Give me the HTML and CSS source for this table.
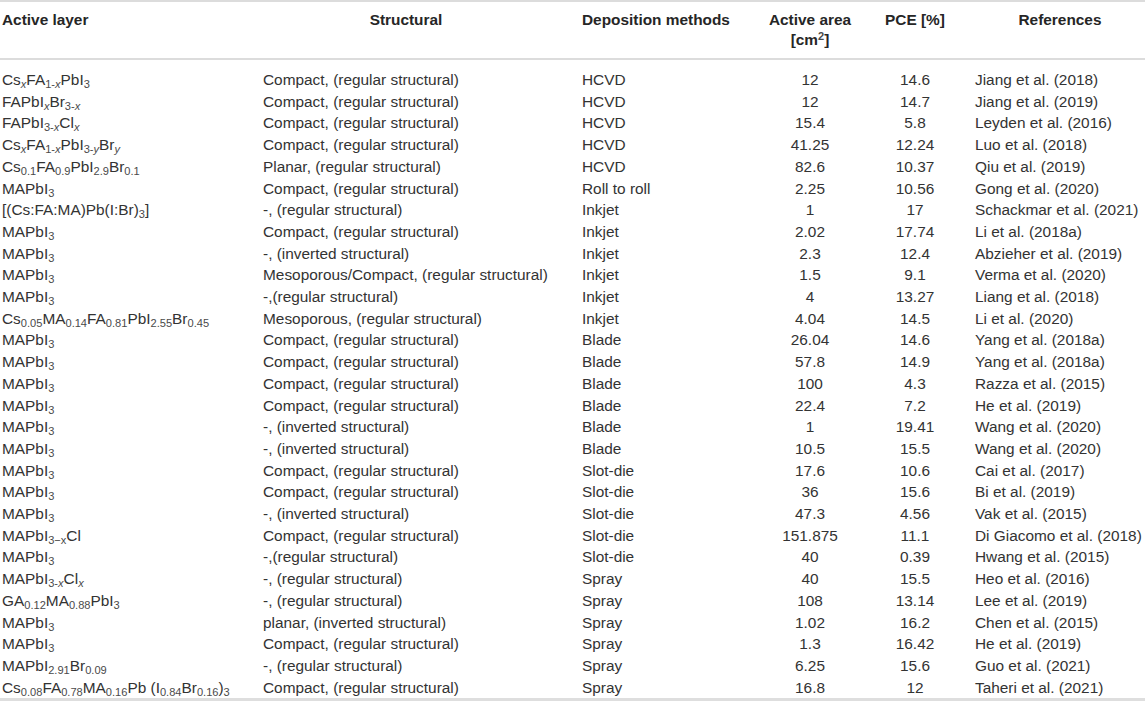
FILE: index.html
```html
<!DOCTYPE html>
<html>
<head>
<meta charset="utf-8">
<link rel="stylesheet" href="styles.css">
</head>
<body>
<table class="data">
<colgroup>
<col class="c1"><col class="c2"><col class="c3"><col class="c4"><col class="c5"><col class="c6">
</colgroup>
<thead>
<tr>
<th class="left first-col">Active layer</th>
<th class="center struct">Structural</th>
<th class="left">Deposition methods</th>
<th class="center">Active area<br>[cm<sup>2</sup>]</th>
<th class="center">PCE [%]</th>
<th class="center refs">References</th>
</tr>
</thead>
<tbody>
<tr class="first"><td>Cs<sub><i>x</i></sub>FA<sub>1-<i>x</i></sub>PbI<sub>3</sub></td><td>Compact, (regular structural)</td><td>HCVD</td><td class="num">12</td><td class="num">14.6</td><td>Jiang et al. (2018)</td></tr>
<tr><td>FAPbI<sub><i>x</i></sub>Br<sub>3-<i>x</i></sub></td><td>Compact, (regular structural)</td><td>HCVD</td><td class="num">12</td><td class="num">14.7</td><td>Jiang et al. (2019)</td></tr>
<tr><td>FAPbI<sub>3-<i>x</i></sub>Cl<sub><i>x</i></sub></td><td>Compact, (regular structural)</td><td>HCVD</td><td class="num">15.4</td><td class="num">5.8</td><td>Leyden et al. (2016)</td></tr>
<tr><td>Cs<sub><i>x</i></sub>FA<sub>1-<i>x</i></sub>PbI<sub>3-<i>y</i></sub>Br<sub><i>y</i></sub></td><td>Compact, (regular structural)</td><td>HCVD</td><td class="num">41.25</td><td class="num">12.24</td><td>Luo et al. (2018)</td></tr>
<tr><td>Cs<sub>0.1</sub>FA<sub>0.9</sub>PbI<sub>2.9</sub>Br<sub>0.1</sub></td><td>Planar, (regular structural)</td><td>HCVD</td><td class="num">82.6</td><td class="num">10.37</td><td>Qiu et al. (2019)</td></tr>
<tr><td>MAPbI<sub>3</sub></td><td>Compact, (regular structural)</td><td>Roll to roll</td><td class="num">2.25</td><td class="num">10.56</td><td>Gong et al. (2020)</td></tr>
<tr><td>[(Cs:FA:MA)Pb(I:Br)<sub>3</sub>]</td><td>-, (regular structural)</td><td>Inkjet</td><td class="num">1</td><td class="num">17</td><td>Schackmar et al. (2021)</td></tr>
<tr><td>MAPbI<sub>3</sub></td><td>Compact, (regular structural)</td><td>Inkjet</td><td class="num">2.02</td><td class="num">17.74</td><td>Li et al. (2018a)</td></tr>
<tr><td>MAPbI<sub>3</sub></td><td>-, (inverted structural)</td><td>Inkjet</td><td class="num">2.3</td><td class="num">12.4</td><td>Abzieher et al. (2019)</td></tr>
<tr><td>MAPbI<sub>3</sub></td><td>Mesoporous/Compact, (regular structural)</td><td>Inkjet</td><td class="num">1.5</td><td class="num">9.1</td><td>Verma et al. (2020)</td></tr>
<tr><td>MAPbI<sub>3</sub></td><td>-,(regular structural)</td><td>Inkjet</td><td class="num">4</td><td class="num">13.27</td><td>Liang et al. (2018)</td></tr>
<tr><td>Cs<sub>0.05</sub>MA<sub>0.14</sub>FA<sub>0.81</sub>PbI<sub>2.55</sub>Br<sub>0.45</sub></td><td>Mesoporous, (regular structural)</td><td>Inkjet</td><td class="num">4.04</td><td class="num">14.5</td><td>Li et al. (2020)</td></tr>
<tr><td>MAPbI<sub>3</sub></td><td>Compact, (regular structural)</td><td>Blade</td><td class="num">26.04</td><td class="num">14.6</td><td>Yang et al. (2018a)</td></tr>
<tr><td>MAPbI<sub>3</sub></td><td>Compact, (regular structural)</td><td>Blade</td><td class="num">57.8</td><td class="num">14.9</td><td>Yang et al. (2018a)</td></tr>
<tr><td>MAPbI<sub>3</sub></td><td>Compact, (regular structural)</td><td>Blade</td><td class="num">100</td><td class="num">4.3</td><td>Razza et al. (2015)</td></tr>
<tr><td>MAPbI<sub>3</sub></td><td>Compact, (regular structural)</td><td>Blade</td><td class="num">22.4</td><td class="num">7.2</td><td>He et al. (2019)</td></tr>
<tr><td>MAPbI<sub>3</sub></td><td>-, (inverted structural)</td><td>Blade</td><td class="num">1</td><td class="num">19.41</td><td>Wang et al. (2020)</td></tr>
<tr><td>MAPbI<sub>3</sub></td><td>-, (inverted structural)</td><td>Blade</td><td class="num">10.5</td><td class="num">15.5</td><td>Wang et al. (2020)</td></tr>
<tr><td>MAPbI<sub>3</sub></td><td>Compact, (regular structural)</td><td>Slot-die</td><td class="num">17.6</td><td class="num">10.6</td><td>Cai et al. (2017)</td></tr>
<tr><td>MAPbI<sub>3</sub></td><td>Compact, (regular structural)</td><td>Slot-die</td><td class="num">36</td><td class="num">15.6</td><td>Bi et al. (2019)</td></tr>
<tr><td>MAPbI<sub>3</sub></td><td>-, (inverted structural)</td><td>Slot-die</td><td class="num">47.3</td><td class="num">4.56</td><td>Vak et al. (2015)</td></tr>
<tr><td>MAPbI<sub>3−x</sub>Cl</td><td>Compact, (regular structural)</td><td>Slot-die</td><td class="num">151.875</td><td class="num">11.1</td><td>Di Giacomo et al. (2018)</td></tr>
<tr><td>MAPbI<sub>3</sub></td><td>-,(regular structural)</td><td>Slot-die</td><td class="num">40</td><td class="num">0.39</td><td>Hwang et al. (2015)</td></tr>
<tr><td>MAPbI<sub>3-<i>x</i></sub>Cl<sub><i>x</i></sub></td><td>-, (regular structural)</td><td>Spray</td><td class="num">40</td><td class="num">15.5</td><td>Heo et al. (2016)</td></tr>
<tr><td>GA<sub>0.12</sub>MA<sub>0.88</sub>PbI<sub>3</sub></td><td>-, (regular structural)</td><td>Spray</td><td class="num">108</td><td class="num">13.14</td><td>Lee et al. (2019)</td></tr>
<tr><td>MAPbI<sub>3</sub></td><td>planar, (inverted structural)</td><td>Spray</td><td class="num">1.02</td><td class="num">16.2</td><td>Chen et al. (2015)</td></tr>
<tr><td>MAPbI<sub>3</sub></td><td>Compact, (regular structural)</td><td>Spray</td><td class="num">1.3</td><td class="num">16.42</td><td>He et al. (2019)</td></tr>
<tr><td>MAPbI<sub>2.91</sub>Br<sub>0.09</sub></td><td>-, (regular structural)</td><td>Spray</td><td class="num">6.25</td><td class="num">15.6</td><td>Guo et al. (2021)</td></tr>
<tr class="last"><td>Cs<sub>0.08</sub>FA<sub>0.78</sub>MA<sub>0.16</sub>Pb (I<sub>0.84</sub>Br<sub>0.16</sub>)<sub>3</sub></td><td>Compact, (regular structural)</td><td>Spray</td><td class="num">16.8</td><td class="num">12</td><td>Taheri et al. (2021)</td></tr>
</tbody>
</table>
</body>
</html>
```

FILE: styles.css
```css
html, body {
  margin: 0;
  padding: 0;
  background: #ffffff;
}

.data {
  width: 1145px;
  border-collapse: collapse;
  table-layout: fixed;
  font-family: "Liberation Sans", Arial, sans-serif;
  font-size: 15.4px;
  color: #333333;
}

.c1 { width: 263px; }
.c2 { width: 319px; }
.c3 { width: 178px; }
.c4 { width: 100px; }
.c5 { width: 110px; }
.c6 { width: 175px; }

.data thead th {
  font-weight: bold;
  color: #262626;
  line-height: 20px;
  padding: 8px 0 8px 0;
  border-top: 2px solid #dcdcdc;
  border-bottom: 2px solid #dcdcdc;
  vertical-align: top;
  white-space: nowrap;
}

.data th.left { text-align: left; }
.data th.center { text-align: center; }
.data th.first-col { padding-left: 2px; }
.data th.struct { padding-right: 33px; }
.data th.refs { padding-left: 5px; }

.data td {
  padding: 0;
  line-height: 21.7px;
  white-space: nowrap;
  vertical-align: middle;
}

.data td:first-child { padding-left: 2px; }
.data td:last-child { padding-left: 5px; }
.data td.num { text-align: center; }

.data tr.first td { padding-top: 9px; }
.data tr.last td { border-bottom: 3px solid #dedede; }

sub, sup {
  font-size: 0.72em;
  line-height: 0;
  color: #4a4a4a;
}
sub { vertical-align: -0.3em; }
sup { vertical-align: 0.45em; }
```
